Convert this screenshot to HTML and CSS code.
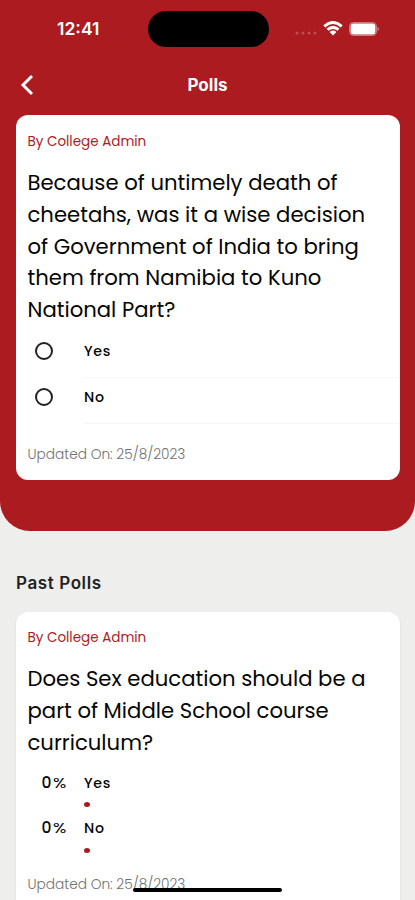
FILE: index.html
```html
<!DOCTYPE html>
<html lang="en">
<head>
<meta charset="utf-8">
<meta name="viewport" content="width=device-width, initial-scale=1">
<title>Polls</title>
<link rel="stylesheet" href="styles.css">
</head>
<body>
<div class="screen">
  <header class="hero">
    <div class="status">
      <span class="time">12:41</span>
      <span class="island"></span>
      <div class="indicators">
        <svg class="dots" width="22" height="4" viewBox="0 0 22 4"><circle cx="2" cy="2" r="1.5"/><circle cx="8" cy="2" r="1.5"/><circle cx="14" cy="2" r="1.5"/><circle cx="20" cy="2" r="1.5"/></svg>
        <svg class="wifi" width="20" height="15" viewBox="0 0 20 15"><path d="M1.3 5.3Q10-2.3 18.7 5.3M4.5 8.7Q10 4 15.5 8.7" fill="none" stroke="#fff" stroke-width="3"/><path d="M6.6 11Q10 8.2 13.4 11L10 14.4Z" fill="#fff"/></svg>
        <svg class="battery" width="31" height="14" viewBox="0 0 31 14"><rect x=".6" y=".6" width="26.8" height="12.8" rx="4" fill="none" stroke="#cf777a" stroke-width="1.2"/><rect x="1.6" y="1.6" width="24.8" height="10.8" rx="3" fill="#fff"/><path d="M28.5 4.5q3 2.5 0 5z" fill="#d58386"/></svg>
      </div>
    </div>
    <nav class="nav">
      <svg class="back" width="14" height="22" viewBox="0 0 14 22"><path d="M12 2L3 11L12 20" fill="none" stroke="#fff" stroke-width="2.9"/></svg>
      <h1>Polls</h1>
    </nav>
    <article class="card current">
      <p class="author">By College Admin</p>
      <h2 class="question">Because of untimely death of cheetahs, was it a wise decision of Government of India to bring them from Namibia to Kuno National Part?</h2>
      <div class="options">
        <div class="option"><span class="radio"></span><span class="label">Yes</span></div>
        <div class="option"><span class="radio"></span><span class="label">No</span></div>
      </div>
      <p class="updated">Updated On: 25/8/2023</p>
    </article>
  </header>
  <main>
    <h2 class="section">Past Polls</h2>
    <article class="card past">
      <p class="author">By College Admin</p>
      <h2 class="question">Does Sex education should be a part of Middle School course curriculum?</h2>
      <div class="results">
        <div class="result"><span class="percent">0<b>%</b></span><div class="label">Yes<i class="bar"></i></div></div>
        <div class="result"><span class="percent">0<b>%</b></span><div class="label">No<i class="bar"></i></div></div>
      </div>
      <p class="updated">Updated On: 25/8/2023</p>
    </article>
  </main>
  <div class="home"></div>
</div>
</body>
</html>
```
FILE: styles.css
```css
* { box-sizing: border-box; margin: 0; padding: 0; }
body { background: #eeeeec; font-family: Poppins, Inter, sans-serif; color: #050505; }
.screen { position: relative; height: 900px; overflow: hidden; }
.hero { height: 531px; background: #ab1b1f; border-radius: 0 0 30px 30px; padding: 0 15px 0 16px; }
.status { height: 58px; display: grid; grid-template-columns: 132px 121px 1fr; align-items: center; }
.time { color: #fff; font: 600 17.5px/20px Inter, sans-serif; padding-left: 41px; white-space: nowrap; }
.island { height: 36px; border-radius: 18px; background: #000; }
.indicators { display: flex; align-items: center; padding-left: 26px; }
.dots { fill: #c04f53; margin-top: 8px; }
.wifi { margin: -2px 0 0 6px; }
.battery { margin: -1px 0 0 6px; }
.nav { height: 57px; display: grid; grid-template-columns: 24px 1fr 24px; align-items: center; padding: 0 0 4px 4px; }
h1 { color: #fff; text-align: center; font: 700 17px/24px Inter, sans-serif; padding-right: 5px; }
.card { background: #fff; border-radius: 12px; padding: 15px 0 0 11.5px; }
.current { height: 365px; }
.author { color: #ab1b1f; font-size: 13.5px; line-height: 24px; }
.question { width: 350px; font-size: 21.2px; line-height: 31.8px; font-weight: 400; margin-top: 13px; }
.label, .percent { font-size: 14.2px; font-weight: 500; line-height: 24px; letter-spacing: .7px; }
.options { padding-top: 6px; }
.option { height: 46px; display: grid; grid-template-columns: 56.5px 1fr; }
.option .label { padding-top: 7px; border-bottom: 1px solid #f6f6f6; }
.radio { width: 18px; height: 18px; border: 2px solid #222; border-radius: 50%; margin: 9.6px 0 0 7.3px; }
.updated { color: #707070; font-size: 13.7px; line-height: 24px; font-weight: 300; }
.current .updated { margin-top: 19px; }
.section { font: 600 17px/24px Inter, sans-serif; letter-spacing: .6px; color: #222; margin: 40px 0 0 16px; }
.past { margin: 17px 15px 0 16px; height: 320px; box-shadow: 0 1px 3px #0001; padding-top: 14px; }
.result { height: 45.5px; display: grid; grid-template-columns: 56.5px 1fr; padding-top: 12.5px; }
.percent { padding-left: 14px; font-size: 15.5px; letter-spacing: 1.6px; }
.percent b { display: inline-block; font-weight: 400; font-size: 15px; transform: scaleX(1.17); transform-origin: left; }
.bar { display: block; width: 6px; height: 5px; border-radius: 50%; background: #a61b20; margin-top: 7.5px; }
.past .updated { margin-top: 24px; }
.home { position: absolute; left: 133px; top: 888px; width: 149px; height: 4px; border-radius: 2px; background: #000; }
```
